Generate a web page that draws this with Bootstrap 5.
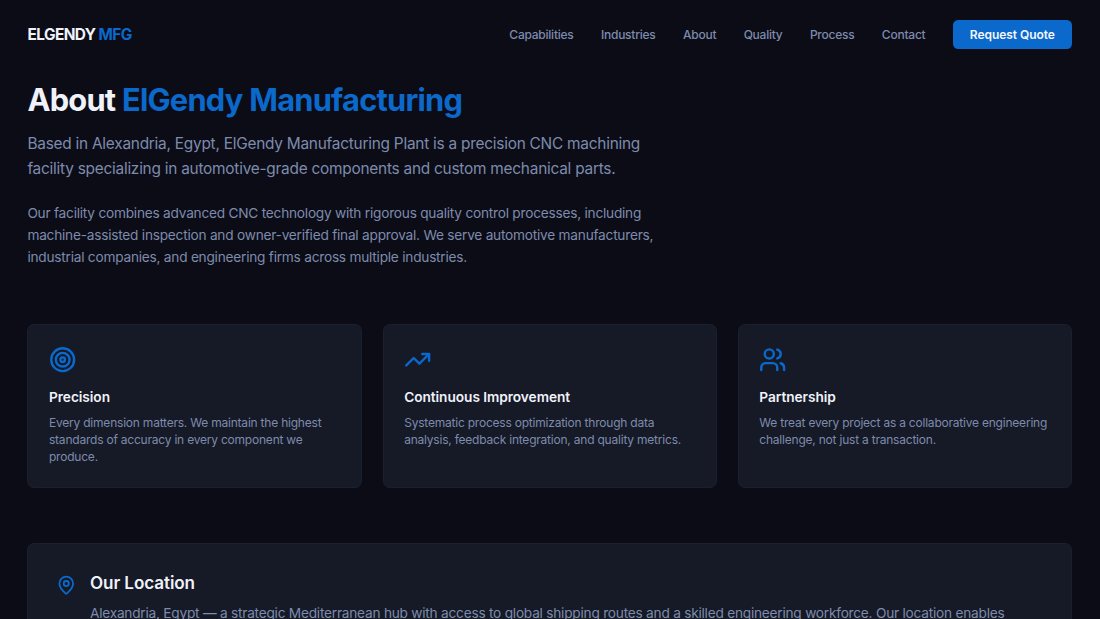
<!DOCTYPE html>
<html lang="en">
<head>
<meta charset="utf-8">
<meta name="viewport" content="width=device-width, initial-scale=1">
<title>About | ElGendy Manufacturing</title>
<link href="https://cdn.jsdelivr.net/npm/bootstrap@5.3.0/dist/css/bootstrap.min.css" rel="stylesheet">
<script defer src="https://cdn.jsdelivr.net/npm/bootstrap@5.3.0/dist/js/bootstrap.bundle.min.js"></script>
<style>
:root{--brand:#0b69cc;--ink:#f0f2fa;--muted:#7d8bac;--panel:#161926;--line:#1a2030}
html,body{height:100%}
body{background:#0c0c17;color:var(--muted);font-family:Inter,"Liberation Sans",sans-serif;font-size:12px;overflow:hidden}
.text-brand{color:var(--brand)}
.page{padding:0 27.6px 0 27.4px}
.site-nav{height:68.5px;padding:0}
.site-nav .navbar-brand{font-size:15.4px;font-weight:700;letter-spacing:-.56px;color:var(--ink);padding:0;margin:0}
.nav-links{gap:27.4px;margin-right:.6px}
.nav-links .nav-link{padding:0;font-weight:500;letter-spacing:-.24px;color:var(--muted);line-height:17px}
.btn-quote{background:var(--brand);color:#f4f7fd;font-size:12px;font-weight:600;letter-spacing:-.06px;width:119px;height:29.5px;padding:0;border:0;border-radius:5.2px;line-height:29.5px}
h1{font-size:30.8px;font-weight:700;letter-spacing:-.75px;line-height:34.2px;color:var(--ink);margin:14px 0 14.2px}
.intro{font-size:15.4px;line-height:25px;letter-spacing:-.238px;margin:0 0 21px}
.copy{font-size:13.7px;line-height:22.25px;letter-spacing:-.24px;margin:0}
.values{margin-top:55.4px;gap:20.5px}
.panel{background:var(--panel);border:1px solid var(--line);border-radius:6.8px}
.value{flex:1 1 0;height:164px;padding:20.7px 0 0 20.6px}
.value svg{width:27.4px;height:27.4px;display:block}
h2{font-size:13.7px;font-weight:600;line-height:20.5px;letter-spacing:-.05px;color:var(--ink);margin:13.7px 0 6.6px}
.value p{line-height:17.15px;letter-spacing:-.215px;margin:0}
.place{margin-top:54.7px;height:150px;padding:27.4px;gap:13.7px}
.place svg{width:20.5px;height:20.5px;margin-top:3.4px;flex:none}
.place h2{font-size:17.1px;line-height:24px;letter-spacing:-.09px;margin:0 0 6.6px}
svg{fill:none;stroke:var(--brand);stroke-width:2.1;stroke-linecap:round;stroke-linejoin:round}
p{white-space:nowrap}
</style>
</head>
<body>
<div class="h-100 overflow-hidden">
<header class="page">
  <nav class="navbar site-nav d-flex flex-nowrap justify-content-between align-items-center">
    <a class="navbar-brand" href="#">ELGENDY <span class="text-brand">MFG</span></a>
    <div class="nav nav-links flex-nowrap align-items-center">
      <a class="nav-link" href="#">Capabilities</a>
      <a class="nav-link" href="#">Industries</a>
      <a class="nav-link" href="#">About</a>
      <a class="nav-link" href="#">Quality</a>
      <a class="nav-link" href="#">Process</a>
      <a class="nav-link" href="#">Contact</a>
      <a class="btn btn-quote" href="#">Request Quote</a>
    </div>
  </nav>
</header>
<main class="page">
  <h1>About <span class="text-brand">ElGendy Manufacturing</span></h1>
  <p class="intro">Based in Alexandria, Egypt, ElGendy Manufacturing Plant is a precision CNC machining<br>facility specializing in automotive-grade components and custom mechanical parts.</p>
  <p class="copy">Our facility combines advanced CNC technology with rigorous quality control processes, including<br>machine-assisted inspection and owner-verified final approval. We serve automotive manufacturers,<br>industrial companies, and engineering firms across multiple industries.</p>

  <div class="values d-flex">
    <section class="panel value">
      <svg viewBox="0 0 24 24"><circle cx="12" cy="12" r="10"/><circle cx="12" cy="12" r="6"/><circle cx="12" cy="12" r="2"/></svg>
      <h2>Precision</h2>
      <p>Every dimension matters. We maintain the highest<br>standards of accuracy in every component we<br>produce.</p>
    </section>
    <section class="panel value">
      <svg viewBox="0 0 24 24"><path d="M16 7h6v6"/><path d="m22 7-8.5 8.5-5-5L2 17"/></svg>
      <h2>Continuous Improvement</h2>
      <p>Systematic process optimization through data<br>analysis, feedback integration, and quality metrics.</p>
    </section>
    <section class="panel value">
      <svg viewBox="0 0 24 24"><path d="M16 21v-2a4 4 0 0 0-4-4H6a4 4 0 0 0-4 4v2"/><circle cx="9" cy="7" r="4"/><path d="M22 21v-2a4 4 0 0 0-3-3.87"/><path d="M16 3.13a4 4 0 0 1 0 7.75"/></svg>
      <h2>Partnership</h2>
      <p>We treat every project as a collaborative engineering<br>challenge, not just a transaction.</p>
    </section>
  </div>

  <section class="panel place d-flex">
    <svg viewBox="0 0 24 24"><path d="M20 10c0 4.993-5.539 10.193-7.399 11.799a1 1 0 0 1-1.202 0C9.539 20.193 4 14.993 4 10a8 8 0 0 1 16 0"/><circle cx="12" cy="10" r="3"/></svg>
    <div>
      <h2>Our Location</h2>
      <p class="copy">Alexandria, Egypt — a strategic Mediterranean hub with access to global shipping routes and a skilled engineering workforce. Our location enables</p>
    </div>
  </section>
</main>
</div>
</body>
</html>
